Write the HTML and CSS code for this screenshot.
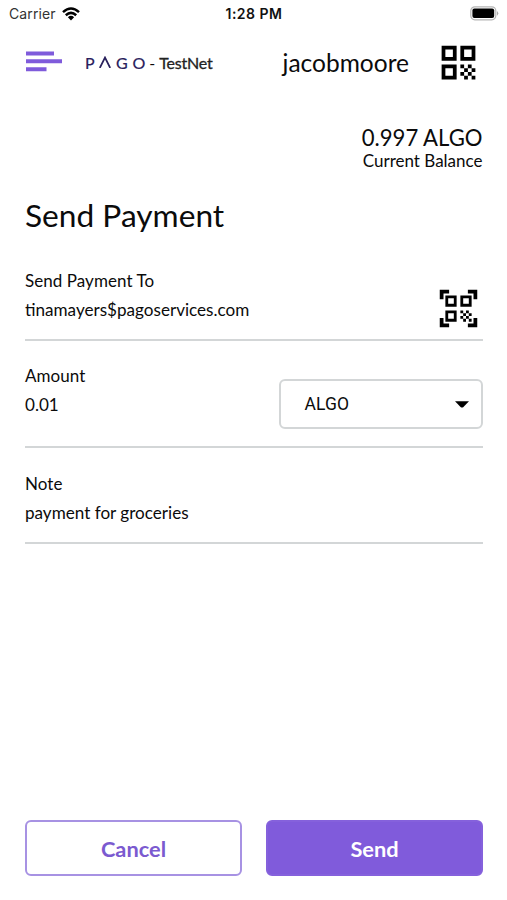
FILE: index.html
```html
<!DOCTYPE html>
<html lang="en">
<head>
<meta charset="utf-8">
<title>Send Payment</title>
<link rel="stylesheet" href="styles.css">
</head>
<body>
<div class="status">
  <div class="carrier"><span>Carrier</span>
    <svg width="18" height="14" viewBox="0 0 18 14"><g fill="none" stroke="#000" stroke-width="2.5"><path d="M1 5.1Q9-2.2 17 5.1"/><path d="M3.8 8.2Q9 3.5 14.2 8.2"/></g><path d="M5.9 10.2Q9 7.5 12.1 10.2L9 13.4Z"/></svg>
  </div>
  <div class="clock">1:28 PM</div>
  <svg class="battery" width="29" height="15" viewBox="0 0 29 15"><rect x=".8" y=".8" width="25" height="13" rx="4" fill="#fff" stroke="#b5b5b5" stroke-width="1.200"/><rect x="2.400" y="2.600" width="21.800" height="9.400" rx="2"/><path d="M27 5Q29.500 7.300 27 9.700Z" fill="#aaa"/></svg>
</div>
<header class="header">
  <svg class="menu" width="36" height="21" viewBox="0 0 36 21" fill="#7f5bdb"><path d="M0 .4h28v4H0zM0 8.300h36v4H0zM0 16.300h20.500v4H0z"/></svg>
  <div class="brand"><span class="pago"><span>P</span><svg width="12" height="12" viewBox="0 0 12 12"><path d="M.8 12 6 1.500 11.200 12" fill="none" stroke="#29205c" stroke-width="1.700"/></svg><span>G</span><span>O</span></span><span class="dash">-</span><span class="net">TestNet</span></div>
  <div class="user">jacobmoore</div>
  <svg class="qr" viewBox="0 0 24 24"><path d="M3 11h8V3H3zM5 5h4v4H5zM3 21h8v-8H3zM5 15h4v4H5zM13 3v8h8V3zM19 9h-4V5h4z" fill-rule="evenodd"/><path d="M13 13h2v2h-2zM15 15h2v2h-2zM13 17h2v2h-2zM15 19h2v2h-2zM17 17h2v2h-2zM17 13h2v2h-2zM19 15h2v2h-2zM19 19h2v2h-2z"/></svg>
</header>
<main class="main">
  <div class="balance"><div class="sum">0.997 ALGO</div><div class="caption">Current Balance</div></div>
  <h1>Send Payment</h1>
  <section class="field to">
    <div><div class="label">Send Payment To</div><div class="value">tinamayers$pagoservices.com</div></div>
    <svg class="scan" viewBox="0 0 24 24"><path fill-rule="evenodd" d="M5 5h6v6H5zM6.500 6.500v3h3v-3zM5 13h6v6H5zM6.500 14.500v3h3v-3zM13 5h6v6h-6zM14.500 6.500v3h3v-3z"/><path d="M13 13h1.500v1.500H13zM14.500 14.500H16V16h-1.500zM16 13h1.500v1.500H16zM13 16h1.500v1.500H13zM14.500 17.500H16V19h-1.500zM16 16h1.500v1.500H16zM17.500 14.500H19V16h-1.500zM17.500 17.500H19V19h-1.500zM22 7h-2V4h-3V2h5zM22 22v-5h-2v3h-3v2zM2 22h5v-2H4v-3H2zM2 2v5h2V4h3V2z"/></svg>
  </section>
  <section class="field amount">
    <div><div class="label">Amount</div><div class="value">0.01</div></div>
    <div class="select"><span>ALGO</span><svg width="14" height="7" viewBox="0 0 14 7"><path d="M0 .3h14L8.200 6.200Q7 7 5.800 6.200Z"/></svg></div>
  </section>
  <section class="field note">
    <div><div class="label">Note</div><div class="value">payment for groceries</div></div>
  </section>
</main>
<footer class="actions"><button class="cancel">Cancel</button><button class="send">Send</button></footer>
</body>
</html>
```

FILE: styles.css
```css
* { box-sizing: border-box; }
body {
  margin: 0;
  height: 900px;
  display: flex;
  flex-direction: column;
  background: #fff;
  color: #0b0b0b;
  font-family: Lato, sans-serif;
  overflow: hidden;
}
svg { display: block; flex: none; }
.status {
  height: 28px;
  display: grid;
  grid-template-columns: 1fr auto 1fr;
  align-items: center;
  padding: 0 8px 1px 9px;
  font-family: Inter, sans-serif;
  font-size: 14px;
}
.carrier { display: flex; align-items: center; gap: 6px; color: #333; letter-spacing: .1px; }
.clock { font-weight: 600; color: #111; letter-spacing: .5px; }
.battery { justify-self: end; }
.header {
  height: 68px;
  display: flex;
  align-items: center;
  padding: 0 26px;
}
.menu { margin-top: -1px; }
.brand {
  display: flex;
  align-items: center;
  margin-left: 23px;
  width: 130px;
  font-size: 16px;
  white-space: nowrap;
}
.pago { display: flex; align-items: center; gap: 4.700px; color: #29205c; -webkit-text-stroke: .2px; }
.dash { margin: 0 4px; }
.net { color: #222; letter-spacing: -.2px; -webkit-text-stroke: .3px; }
.user { margin-left: auto; padding-top: 2px; font-size: 24.500px; line-height: 30px; }
.qr { width: 45px; height: 45px; margin-left: 27px; }
.main { padding: 29px 24.500px 0 25px; }
.balance { width: max-content; margin-left: auto; text-align: right; }
.sum { font-size: 22.100px; line-height: 25px; }
.caption { font-size: 17px; line-height: 22px; }
h1 { margin: 21px 0 0; font-size: 31.700px; line-height: 44px; font-weight: 400; }
.field {
  display: flex;
  justify-content: space-between;
  border-bottom: 2px solid #d3d6d7;
  font-size: 17px;
  letter-spacing: .06px;
  line-height: 29px;
}
.value { font-size: 17.100px; letter-spacing: 0; }
.to { height: 75px; margin-top: 29px; }
.scan { width: 45px; height: 45px; margin: 20px 2px 0 0; }
.amount { height: 87px; margin-top: 20px; }
.note { height: 75px; margin-top: 21px; }
.select {
  width: 204px;
  height: 50px;
  margin-top: 18px;
  padding: 0 12px 0 24px;
  display: flex;
  align-items: center;
  justify-content: space-between;
  border: 2px solid #d3d6d7;
  border-radius: 6px;
  font-family: Roboto, sans-serif;
  font-size: 17.500px;
}
.actions {
  margin-top: auto;
  padding: 0 24px 24px 25px;
  display: grid;
  grid-template-columns: 1fr 1fr;
  gap: 24px;
}
button {
  height: 56px;
  padding: 0;
  border: 2px solid #a792e3;
  border-radius: 6px;
  background: #fff;
  color: #7b5ad0;
  font: bold 21.800px Lato, sans-serif;
}
.send { background: #805bdb; border-color: #8561dc; color: #fff; }
```
